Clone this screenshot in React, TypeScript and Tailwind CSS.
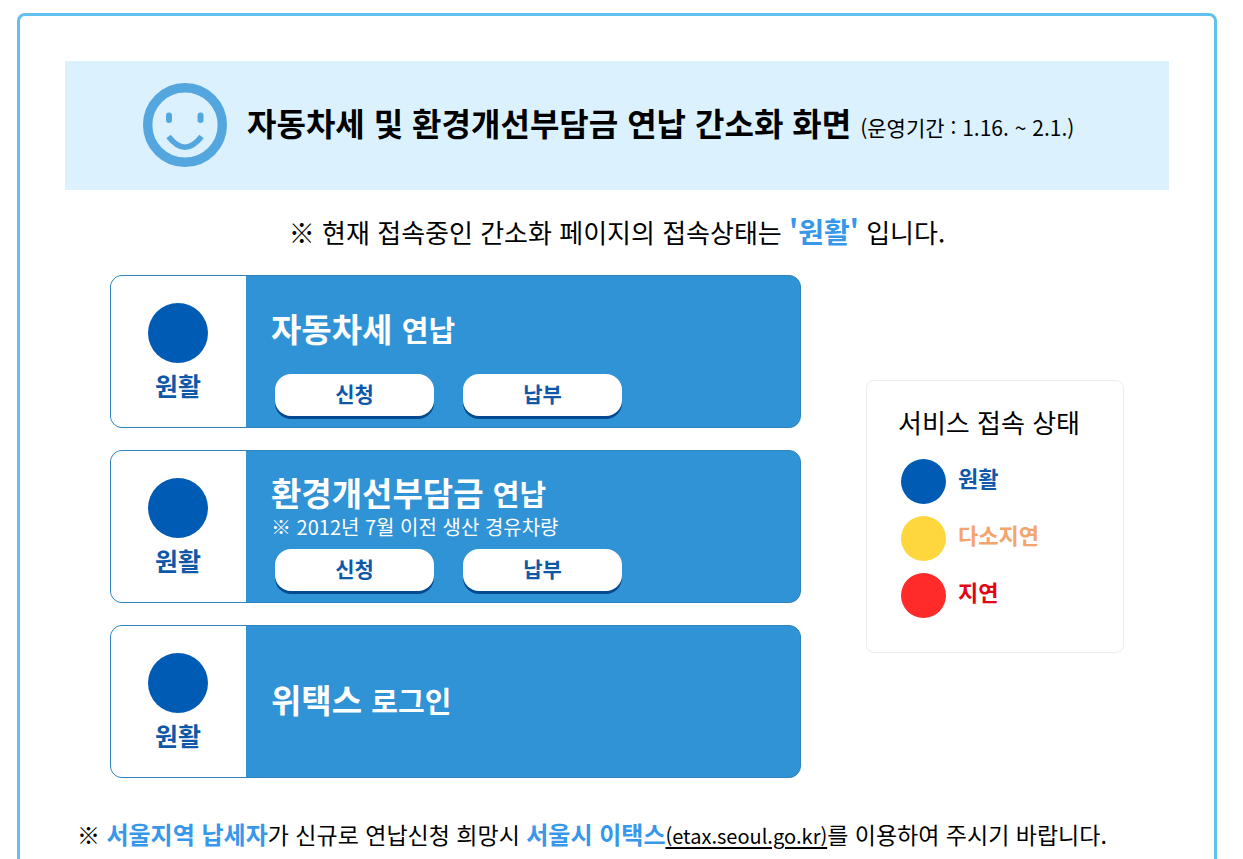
import { ReactNode } from "react"

interface ServiceCardProps {
    title: string
    suffix: string
    note?: string
    actions?: string[]
}

interface LegendItemProps {
    label: string
    dotClass: string
    textClass: string
}

const services: ServiceCardProps[] = [
    { title: "자동차세", suffix: "연납", actions: ["신청", "납부"] },
    { title: "환경개선부담금", suffix: "연납", note: "※ 2012년 7월 이전 생산 경유차량", actions: ["신청", "납부"] },
    { title: "위택스", suffix: "로그인" },
]

const legend: LegendItemProps[] = [
    { label: "원활", dotClass: "bg-[#005bb5]", textClass: "text-[#0f58a8]" },
    { label: "다소지연", dotClass: "bg-[#fed63d]", textClass: "text-[#f5a56c]" },
    { label: "지연", dotClass: "bg-[#ff2a2a]", textClass: "text-[#e30613]" },
]

function SmileIcon() {
    return (
        <svg viewBox="0 0 84 84" fill="none" className="size-[84px] shrink-0 text-[#54a6df]" aria-hidden="true">
            <circle cx="42" cy="42" r="37.3" stroke="currentColor" strokeWidth="9.4" />
            <rect x="23" y="29.5" width="6" height="10.5" rx="3" fill="currentColor" />
            <rect x="54.5" y="29.5" width="6" height="10.5" rx="3" fill="currentColor" />
            <path d="M25.5 53.5C31 60.5 36 64.3 42 64.3S53 60.5 58.5 53.5" stroke="currentColor" strokeWidth="5.6" />
        </svg>
    )
}

function Highlight({ children }: { children: ReactNode }) {
    return <strong className="font-bold text-[#3797ea]">{children}</strong>
}

function ServiceCard({ title, suffix, note, actions }: ServiceCardProps) {
    return (
        <section className="flex min-h-[153px] overflow-hidden rounded-xl border border-[#2f82bb] bg-[#3093d6]">
            <div className="flex w-[135px] shrink-0 flex-col items-center bg-white pt-[27px] pr-px">
                <span className="size-[60px] rounded-full bg-[#005bb5]" />
                <span className="mt-1.5 text-[25px] leading-8 font-bold text-[#0f58a8]">원활</span>
            </div>
            <div className="flex flex-1 flex-col pl-[25px] text-white">
                <div className={`flex flex-1 flex-col justify-center ${note ? "pt-3" : actions ? "pt-1.5" : "pb-1"}`}>
                    <h2 className="text-[33px] leading-10 font-bold whitespace-nowrap">
                        {title} <span className="text-[29px]">{suffix}</span>
                    </h2>
                    {note && <p className="text-xl leading-7 whitespace-nowrap">{note}</p>}
                </div>
                {actions && (
                    <div className="flex gap-[29px] pb-[11px] pl-1">
                        {actions.map((action) => (
                            <button
                                key={action}
                                type="button"
                                className="h-[42px] w-[159px] rounded-2xl bg-white pb-1 text-[21px] leading-8 font-bold text-[#0f58a8] shadow-[0_3px_0_#044a8f]"
                            >
                                {action}
                            </button>
                        ))}
                    </div>
                )}
            </div>
        </section>
    )
}

function LegendItem({ label, dotClass, textClass }: LegendItemProps) {
    return (
        <li className="flex items-center gap-3">
            <span className={`size-[45px] shrink-0 rounded-full ${dotClass}`} />
            <span className={`pb-2.5 text-[22px] leading-8 font-bold ${textClass}`}>{label}</span>
        </li>
    )
}

export default function App() {
    return (
        <main
            lang="ko"
            className="mt-[13px] mr-[26px] ml-[17px] rounded-lg border-3 border-[#62c0ee] bg-white px-[45px] pt-[45px] pb-12 font-['Noto_Sans_CJK_KR',sans-serif] text-black"
        >
            <header className="flex min-h-[129px] items-center gap-5 bg-[#dbf1fe] pb-0.5 pl-[78px]">
                <SmileIcon />
                <h1 className="text-[32px] leading-[48px] font-bold whitespace-nowrap">
                    자동차세 및 환경개선부담금 연납 간소화 화면{" "}
                    <span className="text-[21px] font-normal">(운영기간 : 1.16. ~ 2.1.)</span>
                </h1>
            </header>

            <p className="mt-[21px] text-center text-[26px] leading-10 whitespace-nowrap">
                ※ 현재 접속중인 간소화 페이지의 접속상태는{" "}
                <span className="text-[28px]">
                    <Highlight>'원활'</Highlight>
                </span>{" "}
                입니다.
            </p>

            <div className="mt-[23px] flex items-start gap-[65px] px-[45px]">
                <div className="flex flex-1 flex-col gap-[22px]">
                    {services.map((service) => (
                        <ServiceCard key={service.title} {...service} />
                    ))}
                </div>

                <aside className="mt-[105px] min-h-[273px] w-[258px] shrink-0 rounded-lg border border-[#ececec] px-[31px] pt-[23px]">
                    <h2 className="text-[26px] leading-9 whitespace-nowrap">서비스 접속 상태</h2>
                    <ul className="mt-[19px] flex flex-col gap-3 pl-[3px]">
                        {legend.map((item) => (
                            <LegendItem key={item.label} {...item} />
                        ))}
                    </ul>
                </aside>
            </div>

            <p className="mt-9 pl-3 text-[23px] leading-10 whitespace-nowrap">
                ※{" "}
                <span className="text-2xl">
                    <Highlight>서울지역 납세자</Highlight>
                </span>
                가 신규로 연납신청 희망시{" "}
                <span className="text-2xl">
                    <Highlight>서울시 이택스</Highlight>
                </span>
                <a href="https://etax.seoul.go.kr" className="text-xl underline decoration-2 underline-offset-3">
                    (etax.seoul.go.kr)
                </a>
                를 이용하여 주시기 바랍니다.
            </p>
        </main>
    )
}
